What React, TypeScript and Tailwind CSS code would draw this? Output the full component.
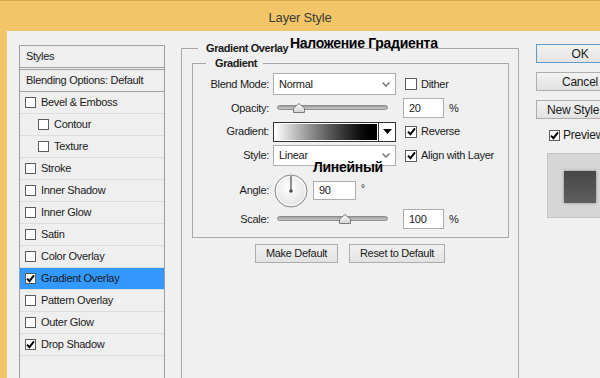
import clsx from 'clsx';

function Check({ on, small }: { on?: boolean; small?: boolean }) {
  return (
    <span
      className={clsx(
        'inline-flex shrink-0 items-center justify-center border border-[#5c5c5c] bg-white',
        small ? 'w-[11px] h-[11px]' : 'w-[12px] h-[12px]'
      )}
    >
      {on && (
        <svg width="9" height="9" viewBox="0 0 9 9">
          <path d="M1 4.6 L3.4 7.2 L8 1.4" fill="none" stroke="#000" strokeWidth="1.9" />
        </svg>
      )}
    </span>
  );
}

function Chevron() {
  return (
    <svg width="8" height="5" viewBox="0 0 8 5">
      <path d="M0.5 0.5 L4 4 L7.5 0.5" fill="none" stroke="#6a6a6a" strokeWidth="1.3" />
    </svg>
  );
}

function Thumb({ className }: { className: string }) {
  return (
    <svg className={clsx('absolute top-[5px]', className)} width="12" height="10" viewBox="0 0 12 10">
      <defs>
        <linearGradient id="th" x1="0" y1="0" x2="0" y2="1">
          <stop offset="0" stopColor="#fafafa" />
          <stop offset="1" stopColor="#d2d2d2" />
        </linearGradient>
      </defs>
      <path d="M6 0.5 L11.5 5 L11.5 9.5 L0.5 9.5 L0.5 5 Z" fill="url(#th)" stroke="#7b7b7b" />
    </svg>
  );
}

function Slider({ thumb }: { thumb: string }) {
  return (
    <div className="relative ml-[4px] w-[123px] h-[20px]">
      <div className="ml-[4px] mt-[7px] w-[111px] h-[5px] rounded-full border border-[#8c8c8c] bg-gradient-to-b from-[#9c9c9c] to-[#c9c9c9]" />
      <Thumb className={thumb} />
    </div>
  );
}

function NumBox({ value }: { value: string }) {
  return (
    <div className="ml-[7px] w-[41px] h-[20px] border border-[#acacac] bg-white flex items-center pl-[5px]">
      {value}
    </div>
  );
}

const layers: { label: string; on?: boolean; indent?: boolean; active?: boolean }[] = [
  { label: 'Bevel & Emboss' },
  { label: 'Contour', indent: true },
  { label: 'Texture', indent: true },
  { label: 'Stroke' },
  { label: 'Inner Shadow' },
  { label: 'Inner Glow' },
  { label: 'Satin' },
  { label: 'Color Overlay' },
  { label: 'Gradient Overlay', on: true, active: true },
  { label: 'Pattern Overlay' },
  { label: 'Outer Glow' },
  { label: 'Drop Shadow', on: true },
];

export default function App() {
  return (
    <div className="w-[600px] h-[378px] overflow-hidden bg-[#f2c668] flex flex-col font-['Liberation_Sans',Arial,sans-serif] text-[#1a1a1a]">
      {/* title bar */}
      <div className="h-[31px] shrink-0 border-t border-[#dcaa4c] flex items-center justify-center pt-[3px] text-[13px] tracking-[-0.2px] text-[#3a3a3a]">
        Layer Style
      </div>

      <div className="relative flex-1 min-h-0 ml-[7px] bg-[#f0f0f0] flex items-start overflow-hidden text-[11px] tracking-[-0.3px]">
        {/* styles list */}
        <div className="ml-[12px] mt-[14px] w-[146px] h-[340px] shrink-0 border border-[#a0a0a0] bg-[#efefef]">
          <div className="h-[22px] border-b border-[#a0a0a0] flex items-center pl-[6px]">Styles</div>
          <div className="h-[23px] mt-[1px] border-t border-b border-[#a0a0a0] flex items-center pl-[6px]">
            Blending Options: Default
          </div>
          {layers.map((l) => (
            <div
              key={l.label}
              className={clsx(
                'h-[22px] border-b border-[#dedede] flex items-center gap-[5px]',
                l.indent ? 'pl-[18px]' : 'pl-[5px]',
                l.active && 'bg-[#3399ff]'
              )}
            >
              <Check on={l.on} small />
              <span>{l.label}</span>
            </div>
          ))}
        </div>

        {/* gradient overlay group */}
        <fieldset className="ml-[16px] mt-[10px] w-[338px] h-[340px] shrink-0 border border-[#a8a8a8]">
          <legend className="ml-[16px] px-[8px] leading-[14px] font-bold tracking-[-0.4px]">Gradient Overlay</legend>

          <fieldset className="ml-[10px] mt-[1px] w-[317px] h-[182px] border border-[#a8a8a8]">
            <legend className="ml-[13px] pl-[9px] pr-[6px] leading-[14px] font-bold tracking-[-0.4px]">Gradient</legend>

            <div className="mt-[3px] h-[22px] flex items-center">
              <span className="w-[76px] text-right">Blend Mode:</span>
              <div className="ml-[4px] w-[123px] h-[22px] border border-[#acacac] bg-white flex items-center justify-between pl-[5px] pr-[5px]">
                <span>Normal</span>
                <Chevron />
              </div>
              <div className="ml-[9px] flex items-center gap-[4px]">
                <Check />
                <span>Dither</span>
              </div>
            </div>

            <div className="mt-[3px] h-[20px] flex items-center">
              <span className="w-[76px] text-right">Opacity:</span>
              <Slider thumb="left-[20px]" />
              <NumBox value="20" />
              <span className="ml-[5px]">%</span>
            </div>

            <div className="mt-[3px] h-[21px] flex items-center">
              <span className="w-[76px] text-right">Gradient:</span>
              <div className="ml-[4px] w-[123px] h-[20px] border border-[#333] bg-white flex">
                <div className="flex-1 border border-white bg-gradient-to-r from-white to-black" />
                <div className="w-[17px] border-l border-[#333] flex items-center justify-center">
                  <svg width="9" height="5" viewBox="0 0 9 5">
                    <path d="M0 0 L9 0 L4.5 5 Z" fill="#000" />
                  </svg>
                </div>
              </div>
              <div className="ml-[9px] flex items-center gap-[4px]">
                <Check on />
                <span>Reverse</span>
              </div>
            </div>

            <div className="mt-[3px] h-[21px] flex items-center">
              <span className="w-[76px] text-right">Style:</span>
              <div className="ml-[4px] w-[123px] h-[21px] border border-[#acacac] bg-white flex items-center justify-between pl-[5px] pr-[5px]">
                <span>Linear</span>
                <Chevron />
              </div>
              <div className="ml-[9px] flex items-center gap-[4px]">
                <Check on />
                <span>Align with Layer</span>
              </div>
            </div>

            <div className="mt-[7px] h-[35px] flex items-center">
              <span className="w-[76px] text-right">Angle:</span>
              <svg className="ml-[5px]" width="34" height="34" viewBox="0 0 34 34">
                <defs>
                  <radialGradient id="dial" cx="0.45" cy="0.4" r="0.6">
                    <stop offset="0" stopColor="#ffffff" />
                    <stop offset="1" stopColor="#e2e2e2" />
                  </radialGradient>
                </defs>
                <circle cx="17" cy="17" r="16" fill="url(#dial)" stroke="#8a8a8a" />
                <circle cx="17" cy="17" r="14.5" fill="none" stroke="#ffffff" />
                <line x1="17" y1="17" x2="17" y2="2" stroke="#4a4a4a" strokeWidth="1.2" />
                <circle cx="17" cy="17" r="1.8" fill="#4a4a4a" />
              </svg>
              <div className="ml-[5px] w-[43px] h-[19px] border border-[#acacac] bg-white flex items-center pl-[5px]">90</div>
              <span className="ml-[5px] self-start mt-[8px] text-[10px]">°</span>
            </div>

            <div className="mt-[1px] h-[20px] flex items-center">
              <span className="w-[76px] text-right">Scale:</span>
              <Slider thumb="left-[66px]" />
              <NumBox value="100" />
              <span className="ml-[5px]">%</span>
            </div>
          </fieldset>

          <div className="mt-[6px] flex justify-center gap-[11px]">
            <button className="w-[83px] h-[19px] border border-[#adadad] bg-gradient-to-b from-[#f2f2f2] to-[#e2e2e2] flex items-center justify-center">
              Make Default
            </button>
            <button className="w-[96px] h-[19px] border border-[#adadad] bg-gradient-to-b from-[#f2f2f2] to-[#e2e2e2] flex items-center justify-center">
              Reset to Default
            </button>
          </div>
        </fieldset>

        {/* right column */}
        <div className="ml-[17px] mt-[13px] w-[90px] shrink-0 flex flex-col text-[12px] tracking-[-0.2px]">
          <button className="w-[88px] h-[19px] border border-[#5a9bd0] bg-gradient-to-b from-[#f2f2f2] to-[#e4e4e4] flex items-center justify-center">
            OK
          </button>
          <button className="mt-[9px] w-[88px] h-[19px] border border-[#adadad] bg-gradient-to-b from-[#f2f2f2] to-[#e2e2e2] flex items-center justify-center">
            Cancel
          </button>
          <button className="mt-[9px] w-[88px] h-[19px] border border-[#adadad] bg-gradient-to-b from-[#f2f2f2] to-[#e2e2e2] flex items-center justify-start pl-[10px]">
            New Style...
          </button>
          <div className="mt-[7px] ml-[13px] flex items-center gap-[3px]">
            <Check on small />
            <span>Preview</span>
          </div>
          <div className="mt-[9px] ml-[11px] w-[66px] h-[65px] border border-[#c4c4c4] bg-[#d6d6d6] pl-[16px] pt-[17px]">
            <div className="w-[32px] h-[32px] bg-gradient-to-b from-[#474747] to-[#5e5e5e] shadow-[0_0_3px_rgba(0,0,0,0.35)]" />
          </div>
        </div>

        {/* annotations over the dialog */}
        <span className="absolute left-[283px] top-[4px] leading-[16px] text-[14px] font-bold tracking-[-0.3px] text-black">
          Наложение Градиента
        </span>
        <span className="absolute left-[306px] top-[128px] leading-[16px] text-[14px] font-bold tracking-[-0.3px] text-black">
          Линейный
        </span>
      </div>
    </div>
  );
}
